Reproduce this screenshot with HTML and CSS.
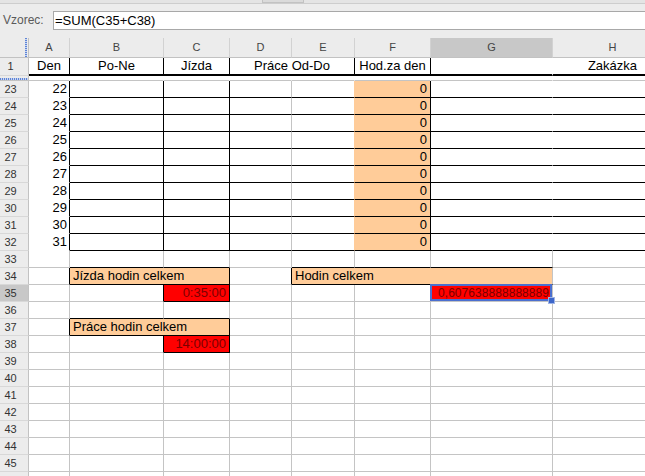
FILE: index.html
```html
<!DOCTYPE html>
<html lang="cs">
<head>
<meta charset="utf-8">
<title>Sešit</title>
<link rel="stylesheet" href="styles.css">
</head>
<body>
<div class="app">
  <div class="toolbar">
    <div class="strip"><div class="strip-tab"></div></div>
    <div class="formula">
      <div class="formula-label">Vzorec:</div>
      <div class="formula-input">=SUM(C35+C38)</div>
    </div>
  </div>
  <div class="sheet">
    <!-- column headers -->
    <div class="hd corner"><span class="fz-v"></span></div>
    <div class="hd">A</div>
    <div class="hd">B</div>
    <div class="hd">C</div>
    <div class="hd">D</div>
    <div class="hd">E</div>
    <div class="hd">F</div>
    <div class="hd sel">G</div>
    <div class="hd">H</div>

    <!-- row 1 -->
    <div class="rh r1">1</div>
    <div class="c m t1 bk-r">Den</div>
    <div class="c m t1 bk-r">Po-Ne</div>
    <div class="c m t1 bk-r">Jízda</div>
    <div class="c m t1 bk-r s2">Práce Od-Do</div>
    <div class="c m t1 bk-r">Hod.za den</div>
    <div class="c t1 no-r"></div>
    <div class="c m t1">Zakázka</div>

    <!-- freeze spacer -->
    <div class="rh fz"><span class="fz-h"></span></div>
    <div class="c sp"></div>
    <div class="c sp"></div>
    <div class="c sp"></div>
    <div class="c sp"></div>
    <div class="c sp"></div>
    <div class="c sp"></div>
    <div class="c sp"></div>
    <div class="c sp"></div>

    <!-- rows 23-32 -->
    <div class="rh">23</div>
    <div class="c r ca">22</div>
    <div class="c bk-r bk-b"></div>
    <div class="c bk-r bk-b"></div>
    <div class="c bk-b"></div>
    <div class="c bk-b or-r"></div>
    <div class="c r or bk-r bk-b">0</div>
    <div class="c bk-b no-r"></div>
    <div class="c bk-b"></div>

    <div class="rh">24</div>
    <div class="c r ca">23</div>
    <div class="c bk-r bk-b"></div>
    <div class="c bk-r bk-b"></div>
    <div class="c bk-b"></div>
    <div class="c bk-b or-r"></div>
    <div class="c r or bk-r bk-b">0</div>
    <div class="c bk-b no-r"></div>
    <div class="c bk-b"></div>

    <div class="rh">25</div>
    <div class="c r ca">24</div>
    <div class="c bk-r bk-b"></div>
    <div class="c bk-r bk-b"></div>
    <div class="c bk-b"></div>
    <div class="c bk-b or-r"></div>
    <div class="c r or bk-r bk-b">0</div>
    <div class="c bk-b no-r"></div>
    <div class="c bk-b"></div>

    <div class="rh">26</div>
    <div class="c r ca">25</div>
    <div class="c bk-r bk-b"></div>
    <div class="c bk-r bk-b"></div>
    <div class="c bk-b"></div>
    <div class="c bk-b or-r"></div>
    <div class="c r or bk-r bk-b">0</div>
    <div class="c bk-b no-r"></div>
    <div class="c bk-b"></div>

    <div class="rh">27</div>
    <div class="c r ca">26</div>
    <div class="c bk-r bk-b"></div>
    <div class="c bk-r bk-b"></div>
    <div class="c bk-b"></div>
    <div class="c bk-b or-r"></div>
    <div class="c r or bk-r bk-b">0</div>
    <div class="c bk-b no-r"></div>
    <div class="c bk-b"></div>

    <div class="rh">28</div>
    <div class="c r ca">27</div>
    <div class="c bk-r bk-b"></div>
    <div class="c bk-r bk-b"></div>
    <div class="c bk-b"></div>
    <div class="c bk-b or-r"></div>
    <div class="c r or bk-r bk-b">0</div>
    <div class="c bk-b no-r"></div>
    <div class="c bk-b"></div>

    <div class="rh">29</div>
    <div class="c r ca">28</div>
    <div class="c bk-r bk-b"></div>
    <div class="c bk-r bk-b"></div>
    <div class="c bk-b"></div>
    <div class="c bk-b or-r"></div>
    <div class="c r or bk-r bk-b">0</div>
    <div class="c bk-b no-r"></div>
    <div class="c bk-b"></div>

    <div class="rh">30</div>
    <div class="c r ca">29</div>
    <div class="c bk-r bk-b"></div>
    <div class="c bk-r bk-b"></div>
    <div class="c bk-b"></div>
    <div class="c bk-b or-r"></div>
    <div class="c r or bk-r bk-b">0</div>
    <div class="c bk-b no-r"></div>
    <div class="c bk-b"></div>

    <div class="rh">31</div>
    <div class="c r ca">30</div>
    <div class="c bk-r bk-b"></div>
    <div class="c bk-r bk-b"></div>
    <div class="c bk-b"></div>
    <div class="c bk-b or-r"></div>
    <div class="c r or bk-r bk-b">0</div>
    <div class="c bk-b no-r"></div>
    <div class="c bk-b"></div>

    <div class="rh">32</div>
    <div class="c r ca">31</div>
    <div class="c bk-r bk-b"></div>
    <div class="c bk-r bk-b"></div>
    <div class="c bk-b"></div>
    <div class="c bk-b or-r"></div>
    <div class="c r or bk-r bk-b">0</div>
    <div class="c bk-b no-r"></div>
    <div class="c bk-b"></div>

    <!-- row 33 -->
    <div class="rh">33</div>
    <div class="c"></div>
    <div class="c bk-b"></div>
    <div class="c bk-b"></div>
    <div class="c"></div>
    <div class="c bk-b"></div>
    <div class="c bk-b"></div>
    <div class="c bk-b"></div>
    <div class="c"></div>

    <!-- row 34 -->
    <div class="rh">34</div>
    <div class="c bk-r"></div>
    <div class="c s2 or bk-r bk-b">Jízda hodin celkem</div>
    <div class="c bk-r"></div>
    <div class="c s3 or bk-b">Hodin celkem</div>
    <div class="c"></div>

    <!-- row 35 -->
    <div class="rh sel">35</div>
    <div class="c"></div>
    <div class="c bk-r"></div>
    <div class="c r rd bk-r bk-b">0:35:00</div>
    <div class="c"></div>
    <div class="c"></div>
    <div class="c"></div>
    <div class="c rd cur"><span class="val">0,607638888888889</span></div>
    <div class="c"></div>

    <!-- row 36 -->
    <div class="rh">36</div>
    <div class="c"></div>
    <div class="c bk-b"></div>
    <div class="c bk-b"></div>
    <div class="c"></div>
    <div class="c"></div>
    <div class="c"></div>
    <div class="c"></div>
    <div class="c"></div>

    <!-- row 37 -->
    <div class="rh">37</div>
    <div class="c bk-r"></div>
    <div class="c s2 or bk-r bk-b">Práce hodin celkem</div>
    <div class="c"></div>
    <div class="c"></div>
    <div class="c"></div>
    <div class="c"></div>
    <div class="c"></div>

    <!-- row 38 -->
    <div class="rh">38</div>
    <div class="c"></div>
    <div class="c bk-r"></div>
    <div class="c r rd bk-r bk-b">14:00:00</div>
    <div class="c"></div>
    <div class="c"></div>
    <div class="c"></div>
    <div class="c"></div>
    <div class="c"></div>

    <!-- rows 39-46 -->
    <div class="rh">39</div>
    <div class="c"></div><div class="c"></div><div class="c"></div><div class="c"></div><div class="c"></div><div class="c"></div><div class="c"></div><div class="c"></div>
    <div class="rh">40</div>
    <div class="c"></div><div class="c"></div><div class="c"></div><div class="c"></div><div class="c"></div><div class="c"></div><div class="c"></div><div class="c"></div>
    <div class="rh">41</div>
    <div class="c"></div><div class="c"></div><div class="c"></div><div class="c"></div><div class="c"></div><div class="c"></div><div class="c"></div><div class="c"></div>
    <div class="rh">42</div>
    <div class="c"></div><div class="c"></div><div class="c"></div><div class="c"></div><div class="c"></div><div class="c"></div><div class="c"></div><div class="c"></div>
    <div class="rh">43</div>
    <div class="c"></div><div class="c"></div><div class="c"></div><div class="c"></div><div class="c"></div><div class="c"></div><div class="c"></div><div class="c"></div>
    <div class="rh">44</div>
    <div class="c"></div><div class="c"></div><div class="c"></div><div class="c"></div><div class="c"></div><div class="c"></div><div class="c"></div><div class="c"></div>
    <div class="rh">45</div>
    <div class="c"></div><div class="c"></div><div class="c"></div><div class="c"></div><div class="c"></div><div class="c"></div><div class="c"></div><div class="c"></div>
    <div class="rh">46</div>
    <div class="c"></div><div class="c"></div><div class="c"></div><div class="c"></div><div class="c"></div><div class="c"></div><div class="c"></div><div class="c"></div>
  </div>
</div>
</body>
</html>
```
FILE: styles.css
```css
* { box-sizing: border-box; }
html, body { margin: 0; padding: 0; }
body {
  background: #ececec;
  font-family: "Liberation Sans", Arial, sans-serif;
}
.app {
  width: 645px;
  height: 476px;
  overflow: hidden;
  display: flex;
  flex-direction: column;
}

/* toolbar + formula bar */
.toolbar {
  flex: none;
  height: 38px;
  background: #ececec;
  display: flex;
  flex-direction: column;
}
.strip {
  height: 4px;
  border-bottom: 1px solid #cdcdcd;
  background: #e4e4e4;
  display: flex;
}
.strip-tab {
  margin-left: 262px;
  width: 42px;
  height: 3px;
  background: #dadada;
  border: 1px solid #c2c2c2;
  border-top: none;
}
.formula {
  margin-top: 7px;
  height: 19px;
  display: flex;
}
.formula-label {
  width: 53px;
  padding-left: 3px;
  font-size: 12px;
  line-height: 19px;
  color: #5a5a5a;
}
.formula-input {
  flex: 1;
  margin-right: -4px;
  background: #fff;
  border: 1px solid #a8a8a8;
  font-size: 13px;
  line-height: 17px;
  padding-left: 1px;
  color: #000;
  white-space: nowrap;
}

/* sheet grid */
.sheet {
  flex: none;
  width: 673px;
  display: grid;
  grid-template-columns: 29px 41px 94px 66px 62px 63px 76px 122px 120px;
  grid-template-rows: 20px 18px 5px repeat(24, 17px);
  background: #fff;
}
.hd {
  background: #ececec;
  border-right: 1px solid #d2d2d2;
  border-bottom: 1px solid #c2c2c2;
  font-size: 11px;
  line-height: 19px;
  color: #444;
  text-align: center;
}
.hd.sel { background: #c8c8c8; }
.corner {
  display: flex;
  border-right: 1px solid #c2c2c2;
}
.fz-v {
  margin-left: 25px;
  width: 2px;
  height: 100%;
  background: repeating-linear-gradient(180deg, #5f84d6 0 1px, #c9d6f0 1px 2px);
}
.rh {
  background: #ececec;
  border-right: 1px solid #c2c2c2;
  border-bottom: 1px solid #d8d8d8;
  font-size: 11px;
  line-height: 16px;
  color: #333;
  text-align: center;
  padding-right: 7px;
}
.rh.sel { background: #c8c8c8; }
.rh.r1 { line-height: 17px; }
.rh.fz {
  display: flex;
  align-items: flex-end;
  padding: 0;
  border-bottom: 1px solid #c2c2c2;
}
.fz-h {
  width: 100%;
  height: 2px;
  background: repeating-linear-gradient(90deg, #5f84d6 0 1px, #c9d6f0 1px 2px);
}

.c {
  border-right: 1px solid #c4c4c4;
  border-bottom: 1px solid #c4c4c4;
  font-size: 13px;
  line-height: 16px;
  padding: 0 3px;
  white-space: nowrap;
  overflow: hidden;
  color: #000;
}
.c.r { text-align: right; }
.c.m { text-align: center; }
.c.s2 { grid-column: span 2; }
.c.s3 { grid-column: span 3; }
.c.t1 { border-bottom: 2px solid #000; }
.c.bk-r { border-right-color: #000; }
.c.bk-b { border-bottom-color: #000; }
.c.no-r { border-right-color: #fff; }
.c.sp { border-right-color: #fff; border-bottom-color: #c4c4c4; }
.c.ca {
  border-right-color: #000;
  border-bottom-color: #fff;
  padding-right: 2px;
}
.c.or { background: #ffcc99; }
.c.or-r { border-right-color: #ffcc99; }
.c.rd { background: #ff0000; color: #7a0000; }

.c.cur {
  position: relative;
  overflow: visible;
  padding: 0;
}
.c.cur .val {
  display: block;
  overflow: hidden;
  text-align: right;
  padding-right: 3px;
  font-size: 12px;
  letter-spacing: 0.05px;
}
.c.cur::after {
  content: "";
  position: absolute;
  left: -1px;
  top: -1px;
  right: 0;
  bottom: 0;
  border: 2px solid #4b6fcf;
}
.c.cur::before {
  content: "";
  position: absolute;
  right: -3px;
  bottom: -3px;
  width: 5px;
  height: 5px;
  background: #3d66c9;
  border: 1px solid #9fb4e6;
  z-index: 1;
}
```
